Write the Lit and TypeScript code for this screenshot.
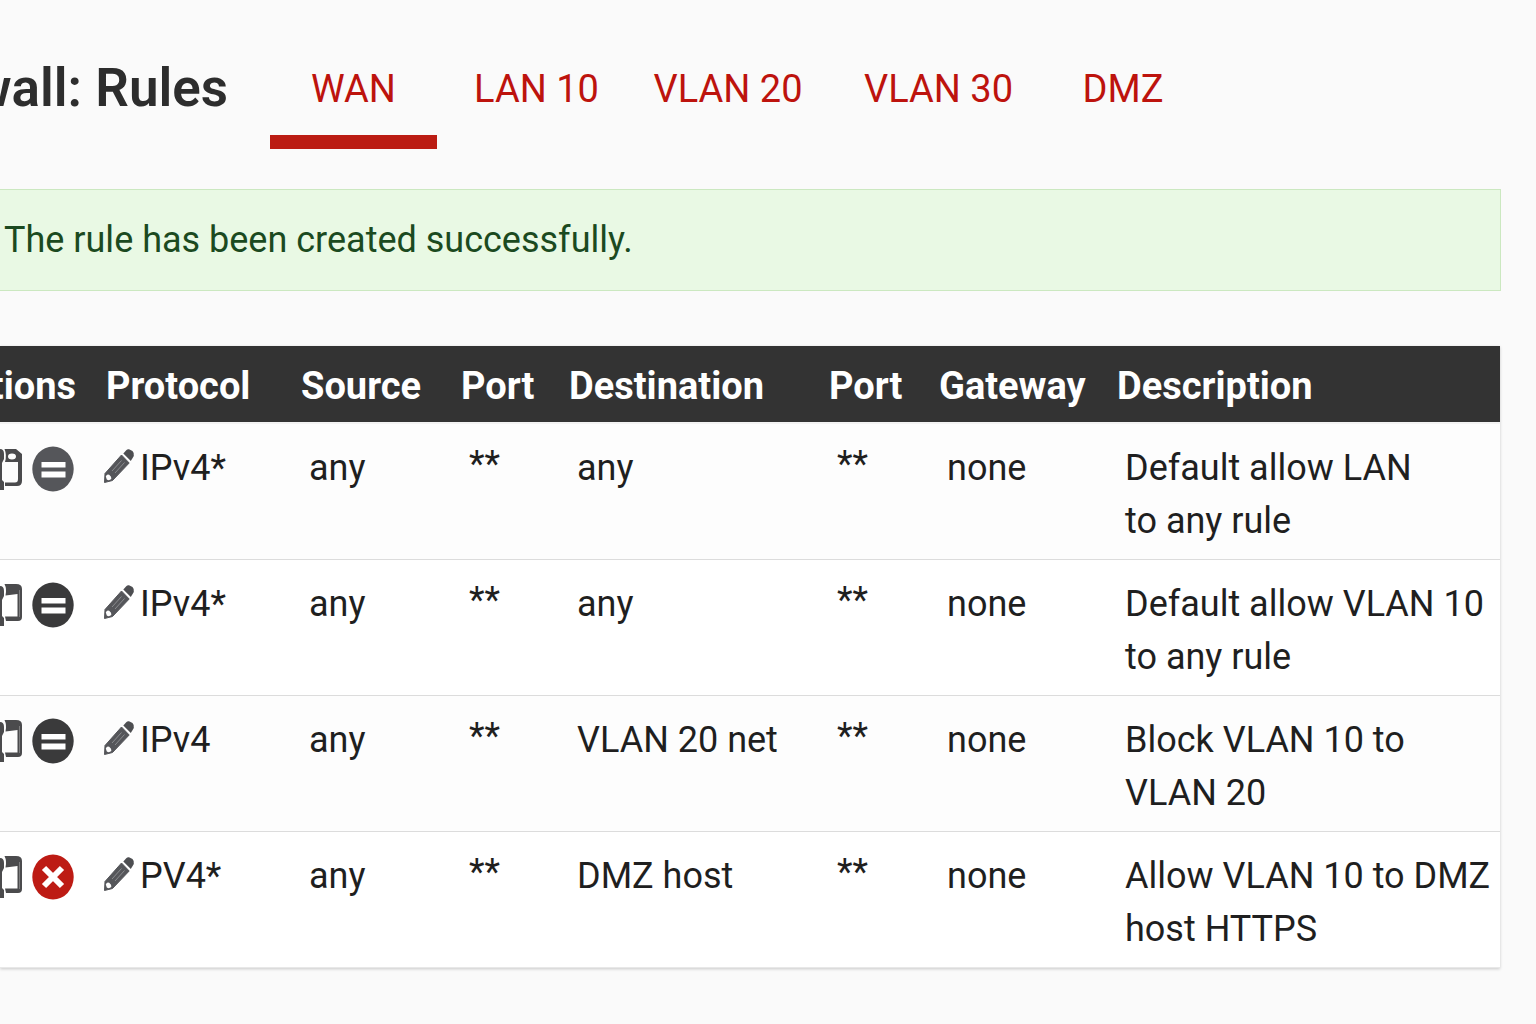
import { LitElement, html, css, svg } from "lit";
import { customElement, property, state } from "lit/decorators.js";
import { classMap } from "lit/directives/class-map.js";

interface Rule {
  tone: "soft" | "dark" | "block";
  protocol: string;
  source: string;
  sourcePort: string;
  destination: string;
  destinationPort: string;
  gateway: string;
  description: [string, string];
}

const RULES: Rule[] = [
  { tone: "soft", protocol: "IPv4*", source: "any", sourcePort: "**", destination: "any", destinationPort: "**", gateway: "none", description: ["Default allow LAN", "to any rule"] },
  { tone: "dark", protocol: "IPv4*", source: "any", sourcePort: "**", destination: "any", destinationPort: "**", gateway: "none", description: ["Default allow VLAN 10", "to any rule"] },
  { tone: "dark", protocol: "IPv4", source: "any", sourcePort: "**", destination: "VLAN 20 net", destinationPort: "**", gateway: "none", description: ["Block VLAN 10 to", "VLAN 20"] },
  { tone: "block", protocol: "PV4*", source: "any", sourcePort: "**", destination: "DMZ host", destinationPort: "**", gateway: "none", description: ["Allow VLAN 10 to DMZ", "host HTTPS"] },
];

const TABS = ["WAN", "LAN 10", "VLAN 20", "VLAN 30", "DMZ"];

@customElement("rule-icon")
export class RuleIcon extends LitElement {
  @property() name: "copy" | "status" | "pencil" = "copy";
  @property() tone: Rule["tone"] = "dark";

  static styles = css`
    :host { display: block; }
    svg { display: block; }
  `;

  render() {
    if (this.name === "pencil") {
      return html`<svg width="32" height="36" viewBox="0 0 32 36" aria-hidden="true">
        <path d="M1.500 34.500L2 25.500L18.500 7L26.200 15L9.500 32.500Z" fill="#55565a" stroke="#55565a" stroke-width="1" stroke-linejoin="round"/>
        <path d="M20.300 5.500L23.500 2Q24.500 1 26 1.300L29.500 3Q31.500 5 30.800 8L27.800 13Z" fill="#4d4e51"/>
        <path d="M2.800 28.500Q4 25.500 6.200 26.800Q8.800 28.500 8.300 31Q6 33 3.800 31.500Z" fill="#fdfdfd"/>
        <path d="M9 23L18.500 12.500M12 25L21.500 14.500" stroke="#98999c" stroke-width=".8" fill="none"/>
      </svg>`;
    }
    if (this.name === "status") {
      const fill = { soft: "#55565a", dark: "#3a3a3b", block: "#bd1b14" }[this.tone];
      return html`<svg width="42" height="46" viewBox="0 0 42 46" aria-hidden="true">
        <ellipse cx="21" cy="23" rx="20.700" ry="22.500" fill=${fill} />
        ${this.tone === "block"
          ? svg`<path d="M12 14L30 32M30 14L12 32" stroke="#fff" stroke-width="6" fill="none"/>`
          : svg`<path d="M9.500 16H33.500V21.500H9.500ZM9.500 25.500H33.500V31.500H9.500Z" fill="#fff"/>`}
      </svg>`;
    }
    const ink = "#4b4b4d";
    if (this.tone === "soft") {
      return html`<svg width="22" height="44" viewBox="0 0 22 44" aria-hidden="true">
        <path d="M0 2Q4 2 4 7V12L2 16V33L4 35V43H0Z" fill=${ink}/>
        <path fill-rule="evenodd" d="M4.500 2H16L22 7V34Q22 39 17 39H5V35.500H15Q18 35.500 18 32V15H5Q7 8 4.500 2ZM8 9.500A4 3 0 1 0 16 9.500A4 3 0 1 0 8 9.500Z" fill=${ink}/>
      </svg>`;
    }
    return html`<svg width="22" height="44" viewBox="0 0 22 44" aria-hidden="true">
      <path d="M0 3Q4 3 4 8V13L2 17V33L4 35V43H0Z" fill=${ink}/>
      <path d="M4.500 1H16Q22 1 22 6V34Q22 38 18 38H6L5 33.500H17.500V11L5.500 12.500Q7 6 4.500 1Z" fill=${ink}/>
      <path d="M19.500 7V34" stroke="#8a8a8c" stroke-width=".8" fill="none"/>
    </svg>`;
  }
}

@customElement("app-root")
export class AppRoot extends LitElement {
  @state() private active = "WAN";

  static styles = css`
    :host {
      display: block;
      box-sizing: border-box;
      min-height: 100vh;
      padding-right: 36px;
      overflow: hidden;
      background: #fafafa;
      color: #1f1f1f;
      font-family: Roboto, "Liberation Sans", sans-serif;
      font-size: 36px;
      line-height: 53px;
    }
    .top { display: flex; align-items: stretch; padding-top: 27px; }
    .title-box {
      display: flex;
      flex: none;
      justify-content: flex-end;
      align-items: center;
      width: 228px;
      height: 122px;
      overflow: hidden;
    }
    h1 {
      flex: none;
      margin: 0;
      font-size: 53px;
      font-weight: 600;
      line-height: 122px;
      white-space: nowrap;
      color: #2d2d2d;
    }
    .tabs {
      display: grid;
      grid-template-columns: 167px 199px 184px 237px 132px;
      margin-left: 42px;
      font-size: 38px;
    }
    .tab {
      height: 108px;
      text-align: center;
      color: #bd130d;
      text-decoration: none;
      white-space: nowrap;
      line-height: 124px;
      border-bottom: 14px solid transparent;
    }
    .tab.active { border-color: #bb1c13; }
    .alert {
      margin-top: 40px;
      margin-right: -1px;
      padding: 24px 4px 23px;
      border: 1px solid #cbe8c0;
      border-left: 0;
      background: #e9f9e4;
      color: #1b4a20;
    }
    table {
      width: 100%;
      margin-top: 55px;
      border-collapse: separate;
      border-spacing: 0;
      table-layout: fixed;
      background: #fdfdfd;
      box-shadow: 0 1px 3px #00000033;
    }
    .c-actions { width: 96px; }
    .c-protocol { width: 195px; }
    .c-source { width: 160px; }
    .c-port { width: 108px; }
    .c-destination { width: 260px; }
    .c-dport { width: 110px; }
    .c-gateway { width: 178px; }
    th {
      padding: 14px 0 9px 10px;
      background: #333;
      background-clip: padding-box;
      border-bottom: 2px solid #f3f3f3;
      color: #fff;
      font-size: 38px;
      font-weight: 700;
      text-align: left;
      white-space: nowrap;
    }
    th.cut { padding-left: 0; padding-right: 20px; overflow: hidden; }
    .cut-text { display: flex; justify-content: flex-end; }
    td {
      padding: 18px 0 11px 18px;
      vertical-align: top;
      white-space: nowrap;
      border-bottom: 1px solid #dcdcdc;
    }
    tr:nth-child(even) td { background: #fff; }
    tr:last-child td { border-bottom-color: #e8e8e8; }
    td.actions { padding-left: 0; }
    td.protocol { padding-left: 7px; }
    td.port { padding-top: 14px; }
    .row { display: flex; align-items: center; height: 53px; }
    .actions .row { gap: 10px; }
    .protocol .row { gap: 5px; }
    button {
      flex: none;
      padding: 0;
      border: 0;
      background: none;
      cursor: pointer;
    }
    .edit { padding-bottom: 6px; }
  `;

  private pick(event: Event, tab: string) {
    event.preventDefault();
    this.active = tab;
  }

  private renderRule(rule: Rule) {
    return html`<tr>
      <td class="actions"><div class="row">
        <button aria-label="Copy rule"><rule-icon name="copy" tone=${rule.tone}></rule-icon></button>
        <button aria-label="Toggle rule"><rule-icon name="status" tone=${rule.tone}></rule-icon></button>
      </div></td>
      <td class="protocol"><div class="row">
        <button class="edit" aria-label="Edit rule"><rule-icon name="pencil"></rule-icon></button>
        <span>${rule.protocol}</span>
      </div></td>
      <td>${rule.source}</td>
      <td class="port">${rule.sourcePort}</td>
      <td>${rule.destination}</td>
      <td class="port">${rule.destinationPort}</td>
      <td>${rule.gateway}</td>
      <td>${rule.description[0]}<br />${rule.description[1]}</td>
    </tr>`;
  }

  render() {
    return html`
      <header class="top">
        <div class="title-box"><h1>wall: Rules</h1></div>
        <nav class="tabs">
          ${TABS.map((tab) => html`<a
            href="#"
            class=${classMap({ tab: true, active: tab === this.active })}
            @click=${(e: Event) => this.pick(e, tab)}
          >${tab}</a>`)}
        </nav>
      </header>
      <main>
        <div class="alert" role="status">The rule has been created successfully.</div>
        <table>
          <colgroup>
            <col class="c-actions" /><col class="c-protocol" /><col class="c-source" /><col class="c-port" />
            <col class="c-destination" /><col class="c-dport" /><col class="c-gateway" /><col />
          </colgroup>
          <thead>
            <tr>
              <th class="cut"><div class="cut-text"><span>tions</span></div></th>
              <th>Protocol</th><th>Source</th><th>Port</th><th>Destination</th>
              <th>Port</th><th>Gateway</th><th>Description</th>
            </tr>
          </thead>
          <tbody>${RULES.map((rule) => this.renderRule(rule))}</tbody>
        </table>
      </main>
    `;
  }
}
